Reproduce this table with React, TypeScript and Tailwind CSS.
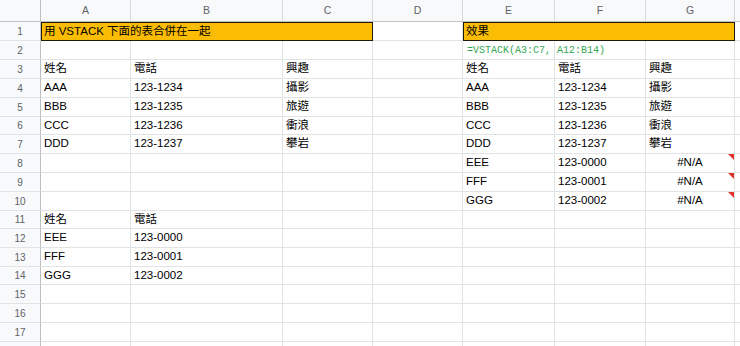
import React from "react";

type Cell = { t?: string; kind?: "formula" | "err" };

const cols = [
  { l: "A", w: "w-[90px]" },
  { l: "B", w: "w-[152px]" },
  { l: "C", w: "w-[90px]" },
  { l: "D", w: "w-[90px]" },
  { l: "E", w: "w-[92px]" },
  { l: "F", w: "w-[91px]" },
  { l: "G", w: "w-[89px]" },
];

const heights = [
  "h-[19px]", "h-[19px]", "h-[19px]", "h-[19px]", "h-[19px]", "h-[18px]",
  "h-[19px]", "h-[19px]", "h-[19px]", "h-[19px]", "h-[18px]", "h-[19px]",
  "h-[19px]", "h-[18px]", "h-[19px]", "h-[19px]", "h-[19px]", "h-[19px]",
];

const E = {} as Cell;
const T = (t: string): Cell => ({ t });

const data: Cell[][] = [
  [],
  [E, E, E, E, { t: "=VSTACK(A3:C7, A12:B14)", kind: "formula" }, E, E],
  [T("姓名"), T("電話"), T("興趣"), E, T("姓名"), T("電話"), T("興趣")],
  [T("AAA"), T("123-1234"), T("攝影"), E, T("AAA"), T("123-1234"), T("攝影")],
  [T("BBB"), T("123-1235"), T("旅遊"), E, T("BBB"), T("123-1235"), T("旅遊")],
  [T("CCC"), T("123-1236"), T("衝浪"), E, T("CCC"), T("123-1236"), T("衝浪")],
  [T("DDD"), T("123-1237"), T("攀岩"), E, T("DDD"), T("123-1237"), T("攀岩")],
  [E, E, E, E, T("EEE"), T("123-0000"), { t: "#N/A", kind: "err" }],
  [E, E, E, E, T("FFF"), T("123-0001"), { t: "#N/A", kind: "err" }],
  [E, E, E, E, T("GGG"), T("123-0002"), { t: "#N/A", kind: "err" }],
  [T("姓名"), T("電話"), E, E, E, E, E],
  [T("EEE"), T("123-0000"), E, E, E, E, E],
  [T("FFF"), T("123-0001"), E, E, E, E, E],
  [T("GGG"), T("123-0002"), E, E, E, E, E],
  [], [], [], [],
];

const font = "font-['Liberation_Sans','Noto_Sans_CJK_TC',sans-serif]";

function RowHeader({ n, h }: { n: number; h: string }) {
  return (
    <div className={`w-[41px] shrink-0 ${h} bg-[#f8f9fa] border-r border-r-[#c0c0c0] border-b border-b-[#e2e3e3] flex items-center justify-center text-[10px] text-[#5f6368]`}>
      {n <= 17 ? n : ""}
    </div>
  );
}

function GridCell({ c, w }: { c: Cell; w: string }) {
  if (c.kind === "formula") {
    return (
      <div className={`${w} shrink-0 h-full border-r border-b border-[#e2e3e3] flex items-center pl-[4px] overflow-visible whitespace-nowrap relative z-10`}>
        <span className="font-['Liberation_Mono',monospace] text-[10px] text-[#34a853]">{c.t}</span>
      </div>
    );
  }
  if (c.kind === "err") {
    return (
      <div className={`${w} shrink-0 h-full border-r border-b border-[#e2e3e3] flex items-center justify-center relative`}>
        <span>{c.t}</span>
        <div className="absolute top-0 right-0 w-0 h-0 border-t-[6px] border-t-[#e0342b] border-l-[6px] border-l-transparent" />
      </div>
    );
  }
  return (
    <div className={`${w} shrink-0 h-full border-r border-b border-[#e2e3e3] flex items-center pl-[3px] whitespace-nowrap`}>
      {c.t}
    </div>
  );
}

export default function App() {
  return (
    <div className={`w-[740px] h-[346px] overflow-hidden bg-white text-black text-[11.5px] ${font}`}>
      <div className="flex h-[22px] bg-[#f8f9fa] border-b border-b-[#c0c0c0]">
        <div className="w-[41px] shrink-0 border-r border-r-[#c0c0c0]" />
        {cols.map((c) => (
          <div key={c.l} className={`${c.w} shrink-0 border-r border-r-[#d9d9d9] flex items-center justify-center text-[10.5px] text-[#5f6368]`}>
            {c.l}
          </div>
        ))}
        <div className="flex-1" />
      </div>
      {data.map((row, i) => {
        const h = heights[i];
        if (i === 0) {
          return (
            <div key={i} className={`flex ${h}`}>
              <RowHeader n={1} h={h} />
              <div className="w-[332px] shrink-0 h-full bg-[#fbbc04] border border-[#1f1a0a] flex items-center pl-[2px] whitespace-nowrap">
                用 VSTACK 下面的表合併在一起
              </div>
              <div className="w-[90px] shrink-0 h-full border-r border-b border-[#e2e3e3]" />
              <div className="w-[272px] shrink-0 h-full bg-[#fbbc04] border border-[#1f1a0a] flex items-center pl-[2px] whitespace-nowrap">
                效果
              </div>
              <div className="flex-1 h-full border-b border-[#e2e3e3]" />
            </div>
          );
        }
        return (
          <div key={i} className={`flex ${h}`}>
            <RowHeader n={i + 1} h={h} />
            {cols.map((c, j) => (
              <GridCell key={c.l} c={row[j] ?? E} w={c.w} />
            ))}
            <div className="flex-1 h-full border-b border-[#e2e3e3]" />
          </div>
        );
      })}
    </div>
  );
}
